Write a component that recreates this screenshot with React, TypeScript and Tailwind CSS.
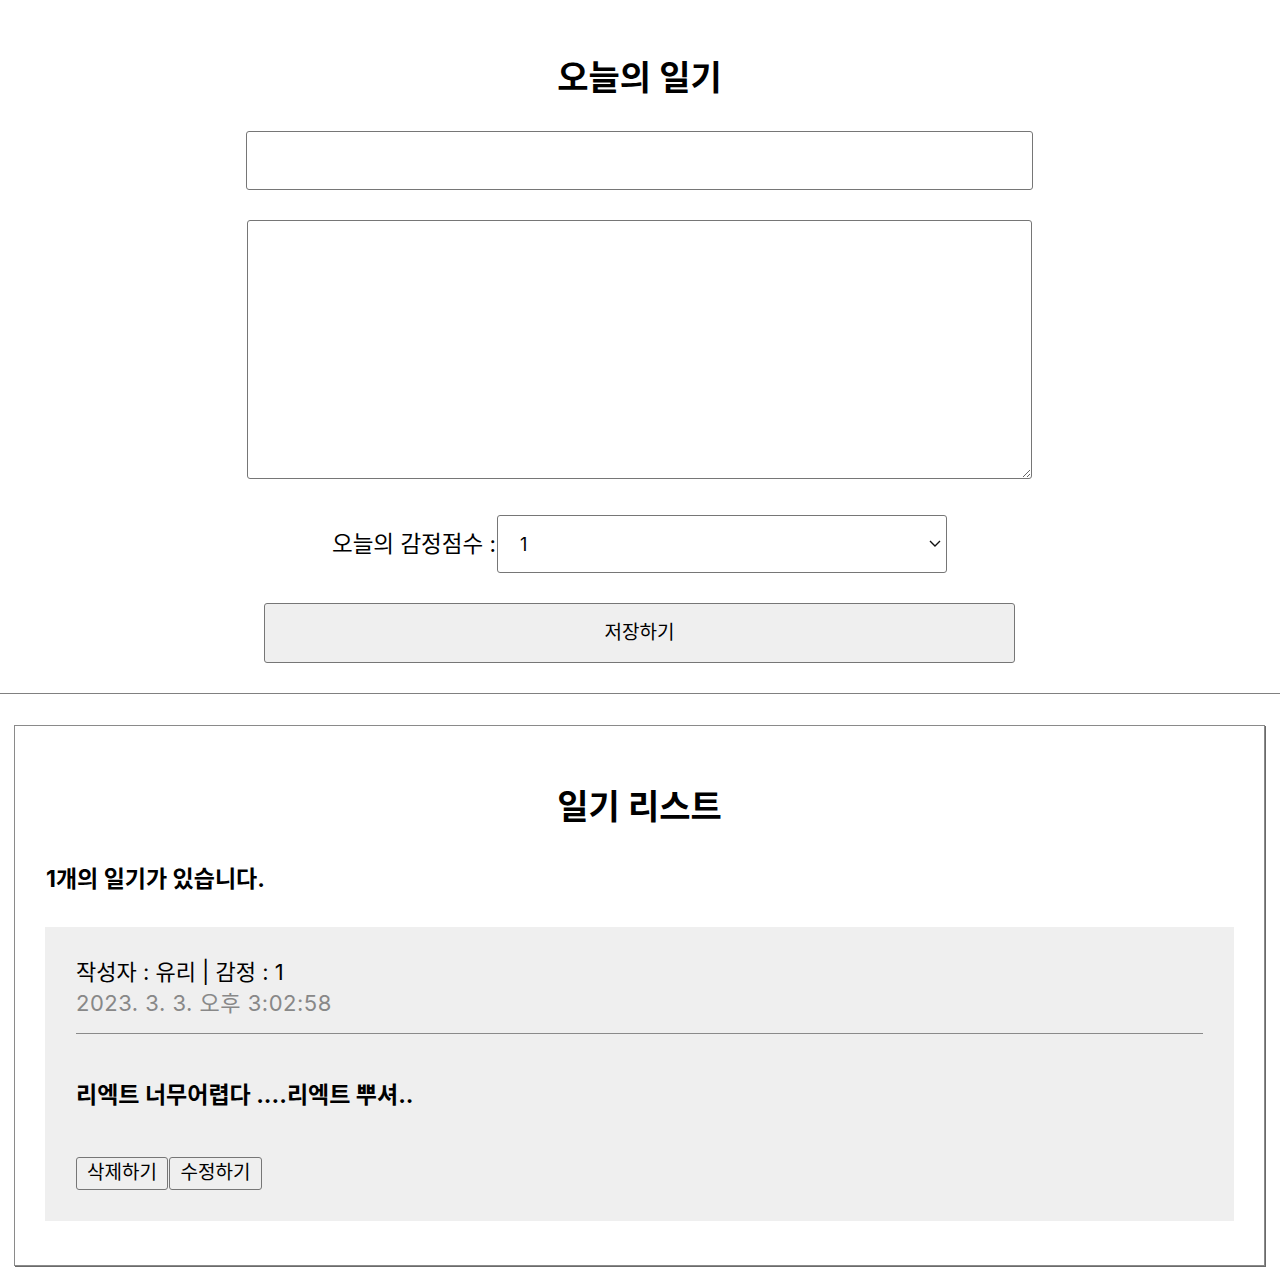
import React from "react";

const font = { fontFamily: 'Inter, "Noto Sans CJK KR", sans-serif' };

export default function App() {
  return (
    <div className="bg-white text-black w-[1280px] min-h-[1287px]" style={font}>
      <div className="w-[1279px] flex flex-col items-center">
        <h2 className="mt-[56px] h-[44px] leading-[44px] text-[34px] font-bold">오늘의 일기</h2>
        <input
          className="mt-[31px] w-[787px] h-[59px] border border-[#767676] rounded-[3px] outline-none"
          defaultValue=""
        />
        <textarea
          className="mt-[30px] w-[785px] h-[259px] border border-[#767676] rounded-[3px] outline-none resize-y"
          defaultValue=""
        />
        <div className="mt-[36px] flex items-center h-[58px]">
          <span className="text-[22.5px] mr-[1px]">오늘의 감정점수 :</span>
          <div className="relative w-[450px] h-[58px] border border-[#767676] rounded-[3px] bg-white flex items-center">
            <span className="pl-[22px] text-[18px]">1</span>
            <svg className="absolute right-[4px] top-[22px]" width="14" height="10" viewBox="0 0 14 10">
              <path d="M2 3 L7 8 L12 3" fill="none" stroke="#111" strokeWidth="1.4" />
            </svg>
          </div>
        </div>
        <button className="mt-[30px] w-[751px] h-[60px] bg-[#efefef] border border-[#767676] rounded-[3px] text-[19px]">
          저장하기
        </button>
      </div>
      <div className="mt-[30px] h-px bg-[#9a9a9a] border-t border-[#808080]" />
      <div className="mt-[31px] mx-[14px] w-[1251px] h-[541px] border border-[#8a8a8a] shadow-[1px_1px_0_#6a6a6a] px-[30px]">
        <h2 className="mt-[59px] h-[44px] leading-[44px] text-center text-[34px] font-bold">일기 리스트</h2>
        <div className="mt-[35px] h-[30px] leading-[30px] text-[23px] font-bold pl-[1px]">1개의 일기가 있습니다.</div>
        <div className="mt-[33px] bg-[#efefef] px-[31px] pt-[30px] pb-[31px]">
          <div className="text-[22px] leading-[31px]">작성자 : 유리 | 감정 : 1</div>
          <div className="text-[22px] leading-[31px] tracking-[0.5px] text-[#888888]">2023. 3. 3. 오후 3:02:58</div>
          <div className="mt-[14px] h-px bg-[#8a8a8a]" />
          <div className="mt-[46px] text-[23px] leading-[30px] font-bold">리엑트 너무어렵다 ....리엑트 뿌셔..</div>
          <div className="mt-[47px] flex gap-[1px]">
            <button className="h-[33px] w-[92px] bg-[#efefef] border border-[#767676] rounded-[3px] text-[19px]">삭제하기</button>
            <button className="h-[33px] w-[93px] bg-[#efefef] border border-[#767676] rounded-[3px] text-[19px]">수정하기</button>
          </div>
        </div>
      </div>
    </div>
  );
}
